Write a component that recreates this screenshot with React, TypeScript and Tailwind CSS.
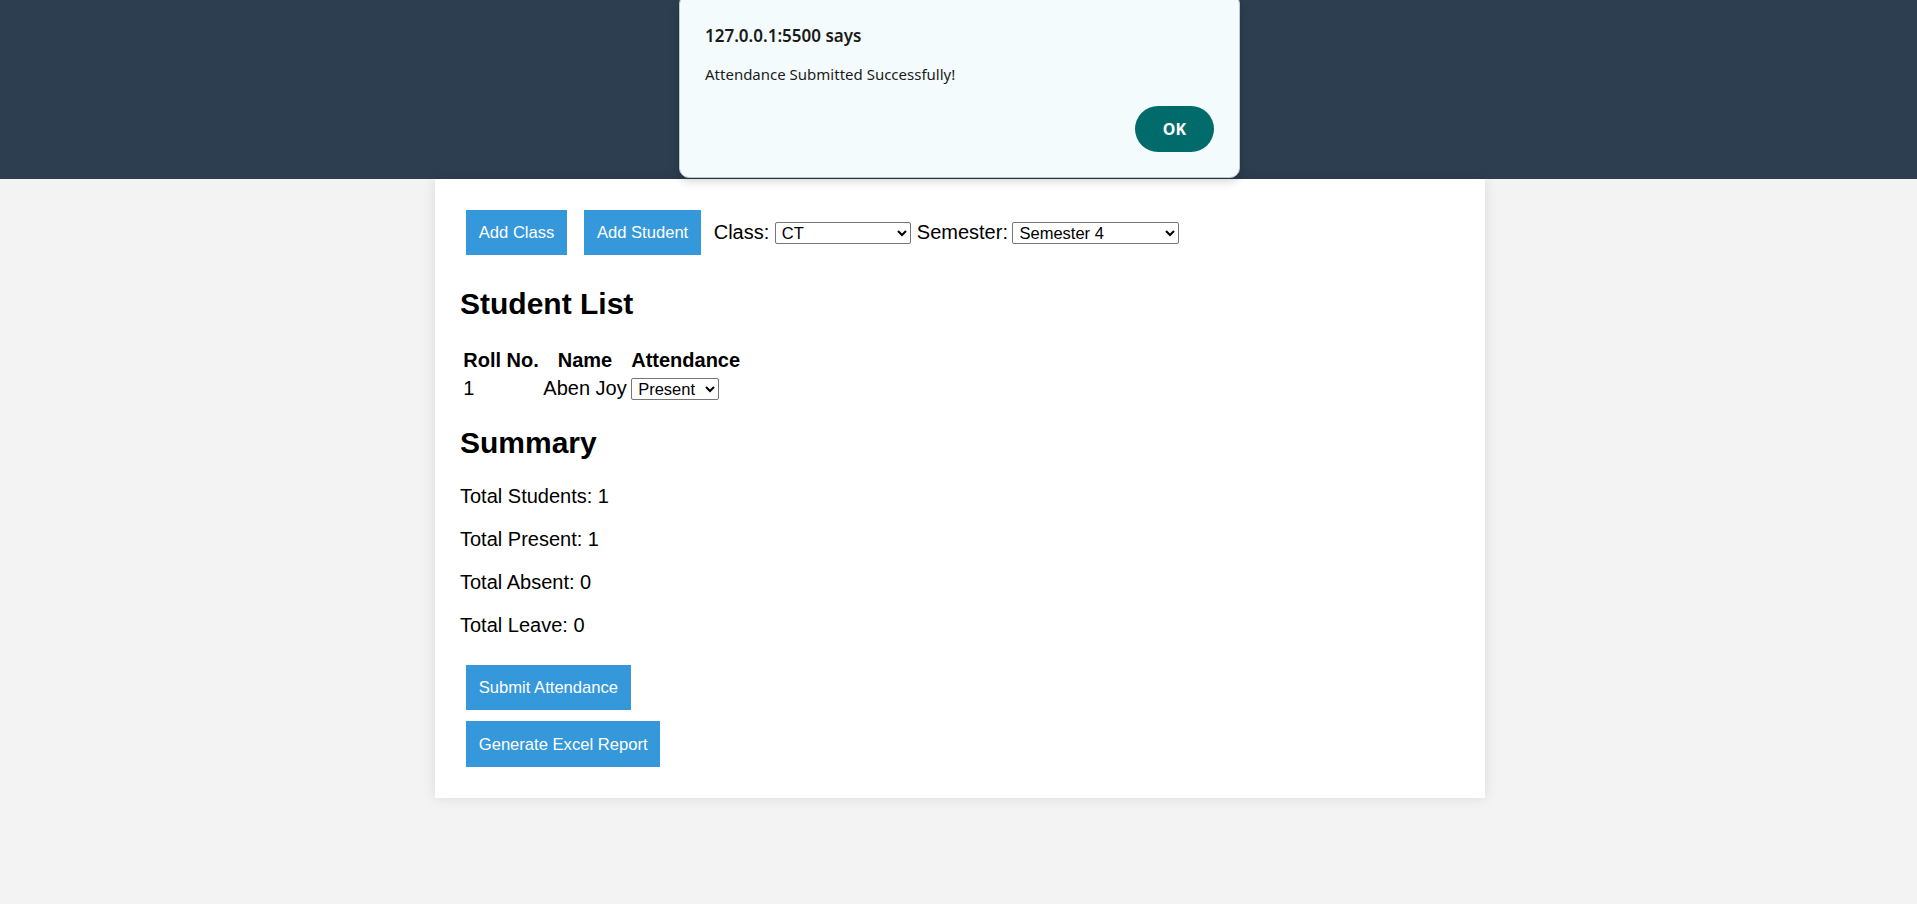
import React from "react";

const btn =
  "bg-[#3498db] text-white text-[16.6px] leading-[1.15] px-[12.5px] h-[45px] font-['Liberation_Sans',Arial,sans-serif] cursor-pointer";

export default function App() {
  return (
    <div className="relative min-h-[904px] bg-[#f3f3f3] font-['Liberation_Sans',Arial,sans-serif] text-black">
      <header className="h-[179px] w-full bg-[#2c3e50]" />

      <div className="pl-[3px]">
        <main className="mx-auto w-[1050px] bg-white p-[25px] shadow-[0_0_12px_rgba(0,0,0,0.1)]">
          <div className="flex items-center py-[6.25px] text-[20px] leading-[1.15]">
            <button className={`${btn} ml-[6.25px]`}>Add Class</button>
            <button className={`${btn} ml-[17.5px]`}>Add Student</button>
            <label className="ml-[13px]">Class:</label>
            <select
              className="ml-[5.5px] h-[22px] w-[136px] rounded-[2px] border border-[#767676] bg-white pl-[2px] text-[16.5px] text-black"
              defaultValue="CT"
            >
              <option>CT</option>
            </select>
            <label className="ml-[6px]">Semester:</label>
            <select
              className="ml-[4.5px] h-[22px] w-[167px] rounded-[2px] border border-[#767676] bg-white pl-[2px] text-[16.5px] text-black"
              defaultValue="Semester 4"
            >
              <option>Semester 4</option>
            </select>
          </div>

          <h2 className="mt-[25px] mb-[25px] text-[30px] font-bold leading-[1.15]">Student List</h2>

          <table className="border-separate border-spacing-[2.5px] text-[20px] leading-[1.15]">
            <thead>
              <tr>
                <th className="p-[1.25px] text-center font-bold">Roll No.</th>
                <th className="p-[1.25px] text-center font-bold">Name</th>
                <th className="p-[1.25px] text-center font-bold">Attendance</th>
              </tr>
            </thead>
            <tbody>
              <tr>
                <td className="p-[1.25px] text-left">1</td>
                <td className="p-[1.25px] text-left">Aben Joy</td>
                <td className="p-[1.25px] text-left">
                  <select
                    className="h-[22px] w-[88px] rounded-[2px] border border-[#767676] bg-white pl-[2px] align-middle text-[16.5px] text-black"
                    defaultValue="Present"
                  >
                    <option>Present</option>
                    <option>Absent</option>
                    <option>Leave</option>
                  </select>
                </td>
              </tr>
            </tbody>
          </table>

          <h2 className="mt-[22px] mb-[25px] text-[30px] font-bold leading-[1.15]">Summary</h2>
          <p className="my-[20px] text-[20px] leading-[1.15]">Total Students: 1</p>
          <p className="my-[20px] text-[20px] leading-[1.15]">Total Present: 1</p>
          <p className="my-[20px] text-[20px] leading-[1.15]">Total Absent: 0</p>
          <p className="mt-[20px] text-[20px] leading-[1.15]">Total Leave: 0</p>

          <div className="mt-[28px] mb-[6px] flex flex-col items-start pl-[6.25px]">
            <button className={btn}>Submit Attendance</button>
            <button className={`${btn} mt-[11px] h-[46px]`}>Generate Excel Report</button>
          </div>
        </main>
      </div>

      <div className="absolute left-[679px] top-[-6px] h-[184px] w-[561px] rounded-[10px] border border-[#bfc8cc] bg-[#f4fbfc] px-[25px] shadow-[0_3px_10px_rgba(0,0,0,0.18)] font-['Noto_Sans','Open_Sans',sans-serif]">
        <div className="flex h-full flex-col">
          <div className="pt-[29px] text-[17px] font-semibold leading-[24px] text-[#1b1b1b]">
            127.0.0.1:5500 says
          </div>
          <div className="mt-[16px] text-[15px] leading-[20px] text-[#1b1b1b]">
            Attendance Submitted Successfully!
          </div>
          <div className="mt-[22px] flex justify-end">
            <button className="h-[46px] w-[79px] rounded-full bg-[#016b6b] text-[16px] font-bold leading-none text-white">
              OK
            </button>
          </div>
        </div>
      </div>
    </div>
  );
}
